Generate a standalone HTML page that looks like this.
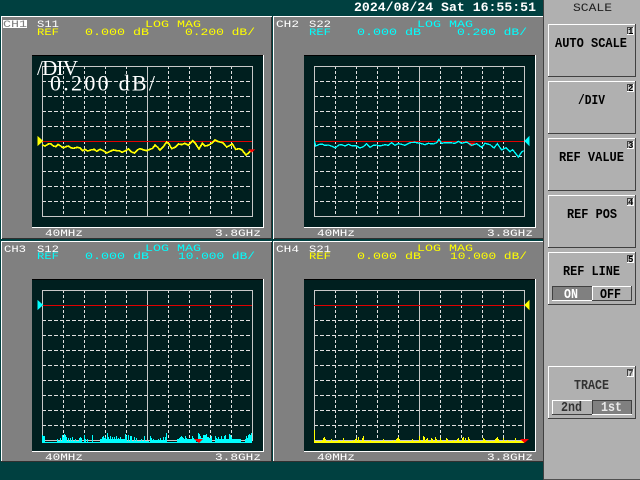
<!DOCTYPE html>
<html><head><meta charset="utf-8"><style>
html,body{margin:0;padding:0;background:#004040;width:640px;height:480px;overflow:hidden}
svg{display:block}
text{font-family:"Liberation Mono",monospace;white-space:pre}
.h{font-size:10.5px;fill:#ffff00}
.b{font-size:14px;font-weight:bold;fill:#000}
.w{font-size:10.5px;fill:#fff}
.l{stroke:#c8c8c8;fill:none}
.d{stroke:#e0e0e0;stroke-dasharray:3 2;fill:none}
.e{stroke:#e0e0e0;stroke-dasharray:4 2;fill:none}
.s{shape-rendering:crispEdges}
</style></head><body>
<svg width="640" height="480" viewBox="0 0 640 480" xmlns="http://www.w3.org/2000/svg">
<rect width="640" height="480" fill="#004040"/>
<text x="354" y="11" font-size="13" font-weight="bold" fill="#fff" textLength="182" lengthAdjust="spacingAndGlyphs">2024/08/24 Sat 16:55:51</text>

<defs>
<g id="panel" class="s">
<rect x="1" y="16" width="271" height="223" fill="#fff"/>
<rect x="2" y="17" width="270" height="222" fill="#303030"/>
<rect x="2" y="17" width="269" height="221" fill="#808080"/>
<rect x="32" y="55" width="232" height="173" fill="#fff"/>
<rect x="32" y="55" width="231" height="172" fill="#001f1f"/>
<rect x="32" y="55" width="231" height="1" fill="#000"/>
<path class="d" d="M63.5 66V216M84.5 66V216M105.5 66V216M126.5 66V216M168.5 66V216M189.5 66V216M210.5 66V216M231.5 66V216"/>
<path class="e" d="M42 81.5H252M42 96.5H252M42 111.5H252M42 126.5H252M42 141.5H252M42 156.5H252M42 171.5H252M42 186.5H252M42 201.5H252"/>
<path class="l" d="M42.5 66.5H252.5V216.5H42.5ZM147.5 66V216"/>
</g>
</defs>

<!-- CH1 -->
<use href="#panel"/>
<rect x="3" y="20" width="24" height="8" fill="#fff"/>
<text x="3" y="27" class="h" style="fill:#808080" textLength="24" lengthAdjust="spacingAndGlyphs">CH1</text>
<text x="37" y="27" class="w" textLength="22" lengthAdjust="spacingAndGlyphs">S11</text>
<text x="145" y="27" class="h" textLength="56" lengthAdjust="spacingAndGlyphs">LOG MAG</text>
<text x="37" y="35" class="h" textLength="22" lengthAdjust="spacingAndGlyphs">REF</text>
<text x="85" y="35" class="h" textLength="64" lengthAdjust="spacingAndGlyphs">0.000 dB</text>
<text x="185" y="35" class="h" textLength="70" lengthAdjust="spacingAndGlyphs">0.200 dB/</text>
<text x="45" y="236" class="w" textLength="38" lengthAdjust="spacingAndGlyphs">40MHz</text>
<text x="215" y="236" class="w" textLength="46" lengthAdjust="spacingAndGlyphs">3.8GHz</text>
<path d="M42 141.5H252" stroke="#e00000" class="s"/>
<path d="M38 137V145L42.5 141Z" fill="#ff0" stroke="#ff0"/>
<g transform="scale(.33333) translate(0,360)">
<polyline class="s" fill="none" stroke="#ff0" stroke-width="5" points="127,75 135,78 145,72 152,71 160,78 168,80 174,73 182,78 190,84 198,80 205,78 212,83 220,85 232,82 240,84 248,92 255,88 263,93 272,90 283,88 290,94 300,88 310,92 320,99 328,95 340,90 350,92 358,92 366,97 375,93 385,87 393,95 403,99 412,90 420,86 432,90 440,92 450,88 458,85 465,75 473,82 480,90 490,80 500,66 507,72 515,86 525,82 535,72 545,74 555,70 565,76 578,62 586,70 597,87 607,70 615,78 625,76 635,70 645,60 655,65 668,68 680,81 690,76 697,72 707,88 718,86 726,90 738,105 747,98 755,90"/>
<path d="M744 88H766L755 98Z" fill="#f00"/>
</g>

<!-- CH2 -->
<use href="#panel" x="272"/>
<text x="276" y="27" class="w" textLength="23" lengthAdjust="spacingAndGlyphs">CH2</text>
<text x="309" y="27" class="w" textLength="22" lengthAdjust="spacingAndGlyphs">S22</text>
<text x="417" y="27" class="h" style="fill:#0ff" textLength="56" lengthAdjust="spacingAndGlyphs">LOG MAG</text>
<text x="309" y="35" class="h" style="fill:#0ff" textLength="22" lengthAdjust="spacingAndGlyphs">REF</text>
<text x="357" y="35" class="h" style="fill:#0ff" textLength="64" lengthAdjust="spacingAndGlyphs">0.000 dB</text>
<text x="457" y="35" class="h" style="fill:#0ff" textLength="70" lengthAdjust="spacingAndGlyphs">0.200 dB/</text>
<text x="317" y="236" class="w" textLength="38" lengthAdjust="spacingAndGlyphs">40MHz</text>
<text x="487" y="236" class="w" textLength="46" lengthAdjust="spacingAndGlyphs">3.8GHz</text>
<path d="M314 141.5H524" stroke="#e00000" class="s"/>
<path d="M529 137V145L525 141Z" fill="#0ff" stroke="#0ff"/>
<g transform="translate(270,0) scale(.33333)">
<path d="M590 428H616L603 440Z" fill="#f00"/>
<polyline class="s" fill="none" stroke="#0ff" stroke-width="4" points="133,422 137,438 146,434 155,432 165,436 175,435 187,439 196,444 206,435 215,434 225,438 235,433 245,437 258,437 270,444 280,440 290,431 300,442 310,436 320,435 330,438 345,434 355,436 365,428 375,436 385,431 395,433 405,436 420,428 435,427 450,430 465,434 475,430 490,432 500,428 507,418 515,430 525,428 540,428 555,430 565,424 575,430 590,426 605,436 620,431 635,442 645,430 660,434 672,444 682,431 695,450 708,443 720,455 728,449 745,471 755,456 761,452"/>
</g>

<!-- CH3 -->
<use href="#panel" y="224"/>
<!-- CH4 -->
<use href="#panel" x="272" y="224"/>
<g class="s">
<rect x="0" y="239" width="543" height="2" fill="#004040"/>
<rect x="1" y="241" width="271" height="1" fill="#fff"/>
<rect x="273" y="241" width="270" height="1" fill="#fff"/>
<rect x="1" y="461" width="542" height="1" fill="#303030"/>
<rect x="0" y="462" width="543" height="18" fill="#004040"/>
<rect x="272" y="239" width="1" height="224" fill="#004040"/>
</g>

<text x="4" y="252" class="w" textLength="22" lengthAdjust="spacingAndGlyphs">CH3</text>
<text x="37" y="252" class="w" textLength="22" lengthAdjust="spacingAndGlyphs">S12</text>
<text x="145" y="251" class="h" style="fill:#0ff" textLength="56" lengthAdjust="spacingAndGlyphs">LOG MAG</text>
<text x="37" y="259" class="h" style="fill:#0ff" textLength="22" lengthAdjust="spacingAndGlyphs">REF</text>
<text x="85" y="259" class="h" style="fill:#0ff" textLength="64" lengthAdjust="spacingAndGlyphs">0.000 dB</text>
<text x="178" y="259" class="h" style="fill:#0ff" textLength="77" lengthAdjust="spacingAndGlyphs">10.000 dB/</text>
<text x="45" y="460" class="w" textLength="38" lengthAdjust="spacingAndGlyphs">40MHz</text>
<text x="215" y="460" class="w" textLength="46" lengthAdjust="spacingAndGlyphs">3.8GHz</text>
<path d="M42 305.5H252" stroke="#e00000" class="s"/>
<path d="M38 301V309L42.5 305Z" fill="#0ff" stroke="#0ff"/>
<g class="s" fill="#0ff">
<rect x="42" y="442" width="210" height="1"/>
<rect x="57" y="441" width="24" height="2"/>
<rect x="100" y="439" width="27" height="4"/>
<rect x="127" y="441" width="22" height="2"/>
<rect x="150" y="440" width="16" height="3"/>
<rect x="178" y="439" width="18" height="4"/>
<rect x="198" y="438" width="13" height="5"/>
<rect x="215" y="439" width="25" height="4"/>
<rect x="245" y="439" width="7" height="4"/>
<path stroke="#0ff" fill="none" d="M42.5 443V435M43.5 443V436M44.5 443V436M57.5 443V439M60.5 443V438M62.5 443V435M63.5 443V437M64.5 443V434M65.5 443V435M66.5 443V437M68.5 443V438M70.5 443V438M72.5 443V437M75.5 443V439M79.5 443V438M80.5 443V437M81.5 443V438M84.5 443V435M85.5 443V439M87.5 443V439M92.5 443V435M102.5 443V437M103.5 443V436M104.5 443V438M105.5 443V437M107.5 443V433M108.5 443V437M110.5 443V436M112.5 443V437M114.5 443V437M116.5 443V436M118.5 443V438M120.5 443V437M125.5 443V434M126.5 443V436M128.5 443V435M130.5 443V436M131.5 443V436M134.5 443V437M136.5 443V438M141.5 443V439M144.5 443V436M150.5 443V436M151.5 443V438M153.5 443V439M158.5 443V439M160.5 443V438M163.5 443V437M165.5 443V437M166.5 443V433M177.5 443V439M179.5 443V438M180.5 443V437M181.5 443V436M182.5 443V437M183.5 443V438M185.5 443V436M186.5 443V438M192.5 443V436M193.5 443V438M198.5 443V433M199.5 443V434M200.5 443V436M203.5 443V435M204.5 443V435M205.5 443V435M206.5 443V434M207.5 443V437M208.5 443V437M211.5 443V436M215.5 443V436M216.5 443V438M218.5 443V437M221.5 443V436M224.5 443V436M225.5 443V435M229.5 443V434M230.5 443V435M231.5 443V437M240.5 443V439M246.5 443V436M247.5 443V438M248.5 443V435M249.5 443V434M250.5 443V435M251.5 443V433"/>
</g>
<path d="M194 439H203L199 443Z" fill="#f00"/>

<text x="276" y="252" class="w" textLength="23" lengthAdjust="spacingAndGlyphs">CH4</text>
<text x="309" y="252" class="w" textLength="22" lengthAdjust="spacingAndGlyphs">S21</text>
<text x="417" y="251" class="h" textLength="56" lengthAdjust="spacingAndGlyphs">LOG MAG</text>
<text x="309" y="259" class="h" textLength="22" lengthAdjust="spacingAndGlyphs">REF</text>
<text x="357" y="259" class="h" textLength="64" lengthAdjust="spacingAndGlyphs">0.000 dB</text>
<text x="450" y="259" class="h" textLength="77" lengthAdjust="spacingAndGlyphs">10.000 dB/</text>
<text x="317" y="460" class="w" textLength="38" lengthAdjust="spacingAndGlyphs">40MHz</text>
<text x="487" y="460" class="w" textLength="46" lengthAdjust="spacingAndGlyphs">3.8GHz</text>
<path d="M314 305.5H524" stroke="#e00000" class="s"/>
<path d="M529 301V309L525 305Z" fill="#ff0" stroke="#ff0"/>
<g class="s">
<rect x="314" y="441" width="210" height="2" fill="#ff0"/>
<path stroke="#ff0" fill="none" d="M314.5 443V430M322.5 443V440M323.5 443V438M324.5 443V437M325.5 443V439M331.5 443V439M338.5 443V440M339.5 443V440M343.5 443V438M353.5 443V440M355.5 443V439M356.5 443V438M358.5 443V437M359.5 443V440M362.5 443V438M363.5 443V436M370.5 443V440M383.5 443V439M393.5 443V440M396.5 443V439M397.5 443V438M398.5 443V437M399.5 443V439M412.5 443V439M419.5 443V436M420.5 443V440M423.5 443V436M424.5 443V437M426.5 443V439M427.5 443V438M431.5 443V438M432.5 443V439M435.5 443V437M436.5 443V439M440.5 443V438M441.5 443V440M446.5 443V438M447.5 443V439M453.5 443V440M457.5 443V439M458.5 443V438M462.5 443V438M463.5 443V437M465.5 443V438M468.5 443V437M469.5 443V439M483.5 443V438M484.5 443V439M485.5 443V440M495.5 443V439M496.5 443V438M497.5 443V437M498.5 443V439M503.5 443V438M507.5 443V440M515.5 443V438"/>
</g>
<path d="M520 439H529L524.5 443Z" fill="#f00"/>

<!-- /DIV overlay -->
<text x="37" y="75" style="font-family:'Liberation Serif',serif;font-size:21px" fill="#fff" textLength="41">/DIV</text>
<text x="50" y="90.5" style="font-family:'Liberation Serif',serif;font-size:22px" fill="#fff" textLength="105">0.200 dB/</text>

<!-- Sidebar -->
<g class="s">
<rect x="544" y="0" width="96" height="480" fill="#b0b0b0"/>
<rect x="543" y="0" width="1" height="480" fill="#404040"/>
<rect x="544" y="479" width="96" height="1" fill="#505050"/>
</g>
<text x="573" y="11" font-size="11" fill="#202020" textLength="39" lengthAdjust="spacingAndGlyphs">SCALE</text>
<defs>
<g id="btn" class="s">
<rect x="548" y="24" width="88" height="53" fill="#404040"/>
<rect x="548" y="24" width="87" height="52" fill="#fff"/>
<rect x="549" y="25" width="86" height="51" fill="#b0b0b0"/>
<rect x="627" y="27" width="7" height="8" fill="#fff"/>
<rect x="627" y="27" width="6" height="7" fill="#404040"/>
<rect x="628" y="28" width="5" height="6" fill="#c8c8c8"/>
</g>
</defs>
<use href="#btn"/><use href="#btn" y="57"/><use href="#btn" y="114"/><use href="#btn" y="171"/><use href="#btn" y="228"/><use href="#btn" y="342"/>
<g font-size="9" font-weight="bold" fill="#000">
<text x="628" y="34">1</text><text x="628" y="91">2</text><text x="628" y="148">3</text><text x="628" y="205">4</text><text x="628" y="262">5</text><text x="628" y="376" fill="#444">7</text>
</g>
<text x="555" y="47" class="b" textLength="72" lengthAdjust="spacingAndGlyphs">AUTO SCALE</text>
<text x="578" y="104" class="b" textLength="27" lengthAdjust="spacingAndGlyphs">/DIV</text>
<text x="559" y="161" class="b" textLength="65" lengthAdjust="spacingAndGlyphs">REF VALUE</text>
<text x="567" y="218" class="b" textLength="50" lengthAdjust="spacingAndGlyphs">REF POS</text>
<text x="563" y="275" class="b" textLength="57" lengthAdjust="spacingAndGlyphs">REF LINE</text>

<g class="s">
<rect x="552" y="286" width="41" height="15" fill="#fff"/>
<rect x="552" y="286" width="40" height="14" fill="#404040"/>
<rect x="553" y="287" width="39" height="13" fill="#808080"/>
<rect x="592" y="286" width="40" height="15" fill="#404040"/>
<rect x="592" y="286" width="39" height="14" fill="#fff"/>
<rect x="593" y="287" width="38" height="13" fill="#b0b0b0"/>
</g>
<text x="564" y="298" class="b" style="fill:#fff" textLength="14" lengthAdjust="spacingAndGlyphs">ON</text>
<text x="600" y="298" class="b" textLength="21" lengthAdjust="spacingAndGlyphs">OFF</text>

<text x="574" y="389" class="b" style="fill:#333" textLength="35" lengthAdjust="spacingAndGlyphs">TRACE</text>
<g class="s">
<rect x="552" y="400" width="41" height="15" fill="#fff"/>
<rect x="553" y="401" width="39" height="13" fill="#b0b0b0"/>
<rect x="592" y="400" width="40" height="15" fill="#404040"/>
<rect x="593" y="401" width="38" height="13" fill="#808080"/>
<rect x="592" y="414" width="40" height="1" fill="#fff"/>
<rect x="552" y="414" width="40" height="1" fill="#404040"/>
</g>
<text x="561" y="411" class="b" style="fill:#333" textLength="21" lengthAdjust="spacingAndGlyphs">2nd</text>
<text x="601" y="411" class="b" style="fill:#e8e8e8" textLength="21" lengthAdjust="spacingAndGlyphs">1st</text>
</svg>
</body></html>
